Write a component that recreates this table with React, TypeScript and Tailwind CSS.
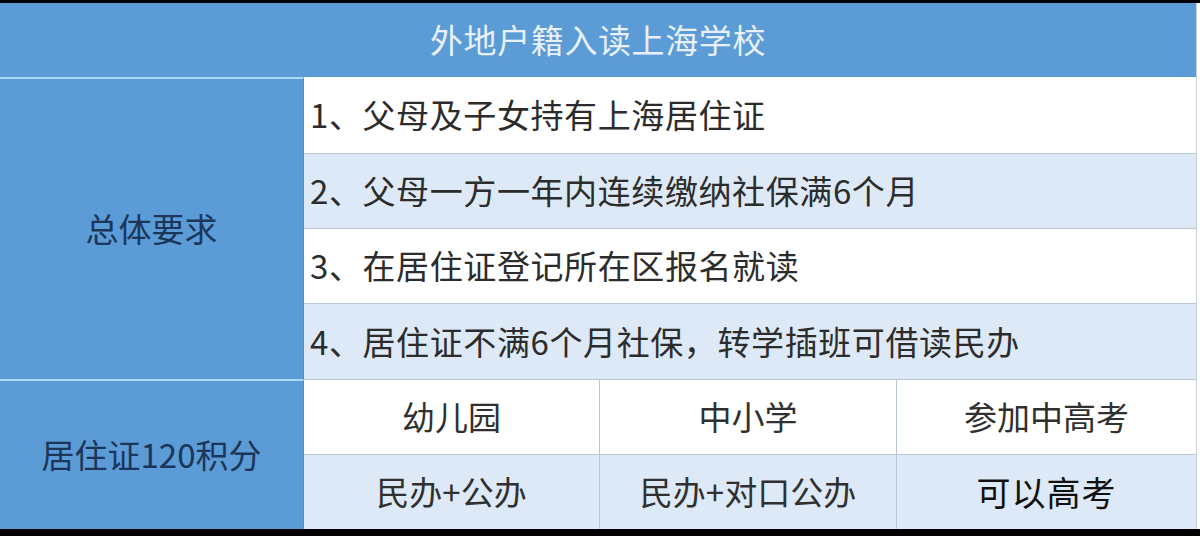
import React from "react";

const font = { fontFamily: '"Noto Sans CJK SC", "Noto Sans", sans-serif' };

export default function App() {
  return (
    <div
      className="w-[1200px] h-[536px] bg-white flex flex-col overflow-hidden"
      style={font}
    >
      <div className="h-[3px] bg-black shrink-0" />
      <div className="w-[1197px] border-r border-[#c9d3dc] flex flex-col shrink-0">
        {/* Header */}
        <div className="h-[74px] bg-[#5b9bd6] flex items-center justify-center text-[33px] text-[#e8f0f9] tracking-[0.6px]">
          外地户籍入读上海学校
        </div>

        {/* General requirements */}
        <div className="h-[302px] flex">
          <div className="w-[304px] shrink-0 bg-[#5b9bd6] border-t-2 border-[#a9dcf4] border-r border-r-[#4e8ccb] flex items-center justify-center text-[33px] text-[#1b3659]">
            总体要求
          </div>
          <div className="flex-1 flex flex-col text-[33px] text-[#2c2c2c] tracking-[0.6px]">
            <div className="h-[77px] bg-white border-b border-[#b9c7d4] flex items-center pl-[6px]">
              1、父母及子女持有上海居住证
            </div>
            <div className="h-[75px] bg-[#dde9f6] border-b border-[#b9c7d4] flex items-center pl-[6px]">
              2、父母一方一年内连续缴纳社保满6个月
            </div>
            <div className="h-[75px] bg-white border-b border-[#b9c7d4] flex items-center pl-[6px]">
              3、在居住证登记所在区报名就读
            </div>
            <div className="h-[75px] bg-[#dde9f6] flex items-center pl-[6px]">
              4、居住证不满6个月社保，转学插班可借读民办
            </div>
          </div>
        </div>

        {/* 120 points */}
        <div className="h-[150px] flex">
          <div className="w-[304px] shrink-0 bg-[#5b9bd6] border-t-2 border-[#a9dcf4] border-r border-r-[#4e8ccb] flex items-center justify-center text-[33px] text-[#1b3659]">
            居住证120积分
          </div>
          <div className="flex-1 grid grid-cols-[296px_297px_1fr] grid-rows-2 text-[33px] text-[#303030] border-t border-[#b9c7d4]">
            <div className="bg-white border-b border-r border-[#b9c7d4] flex items-center justify-center">
              幼儿园
            </div>
            <div className="bg-white border-b border-r border-[#b9c7d4] flex items-center justify-center">
              中小学
            </div>
            <div className="bg-white border-b border-[#b9c7d4] flex items-center justify-center">
              参加中高考
            </div>
            <div className="bg-[#dde9f6] border-r border-[#b9c7d4] flex items-center justify-center">
              民办+公办
            </div>
            <div className="bg-[#dde9f6] border-r border-[#b9c7d4] flex items-center justify-center">
              民办+对口公办
            </div>
            <div className="bg-[#dde9f6] flex items-center justify-center text-[34px] tracking-[1px] text-[#111111]">
              可以高考
            </div>
          </div>
        </div>
      </div>
      <div className="flex-1 bg-black" />
    </div>
  );
}
